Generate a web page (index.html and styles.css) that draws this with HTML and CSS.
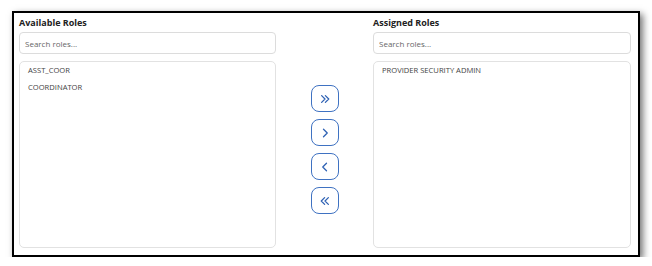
FILE: index.html
```html
<!DOCTYPE html>
<html lang="en">
<head>
<meta charset="UTF-8" />
<title>Role Assignment</title>
<link rel="stylesheet" href="styles.css">
</head>
<body>
  <div class="frame">
    <section class="panel">
      <h3>Available Roles</h3>
      <input type="text" class="search" placeholder="Search roles..." />
      <ul class="list">
        <li>ASST_COOR</li>
        <li>COORDINATOR</li>
      </ul>
    </section>

    <div class="moves">
      <button type="button" aria-label="Move all right">
        <svg viewBox="0 0 16 16"><path d="M3.5 3.5 L8 8 L3.5 12.5 M8.5 3.5 L13 8 L8.5 12.5" /></svg>
      </button>
      <button type="button" aria-label="Move right">
        <svg viewBox="0 0 16 16"><path d="M6 3 L11 8 L6 13" /></svg>
      </button>
      <button type="button" aria-label="Move left">
        <svg viewBox="0 0 16 16"><path d="M10 3 L5 8 L10 13" /></svg>
      </button>
      <button type="button" aria-label="Move all left">
        <svg viewBox="0 0 16 16"><path d="M7.5 3.5 L3 8 L7.5 12.5 M12.5 3.5 L8 8 L12.5 12.5" /></svg>
      </button>
    </div>

    <section class="panel">
      <h3>Assigned Roles</h3>
      <input type="text" class="search" placeholder="Search roles..." />
      <ul class="list">
        <li>PROVIDER SECURITY ADMIN</li>
      </ul>
    </section>
  </div>
</body>
</html>
```

FILE: styles.css
```css
* {
  box-sizing: border-box;
}
body, html {
  margin: 0;
  padding: 0;
  background-color: #fff;
  font-family: 'Open Sans', 'Noto Sans', sans-serif;
  color: #333;
}

.frame {
  margin: 11px 0 0 12px;
  width: 628px;
  height: 246px;
  border: 2px solid #000;
  box-shadow: 3px 3px 7px rgba(0, 0, 0, 0.55);
  padding: 3px 7px 7px 5px;
  display: grid;
  grid-template-columns: 257px 97px 1fr;
}

.panel {
  display: flex;
  flex-direction: column;
  min-height: 0;
}

h3 {
  margin: 0 0 2px;
  font-size: 9px;
  line-height: 14px;
  font-weight: 700;
  color: #222;
}

.search {
  height: 22px;
  border: 1px solid #dcdcdc;
  border-radius: 4px;
  padding: 0 5px;
  font-family: inherit;
  font-size: 8px;
  color: #555;
  margin-bottom: 7px;
}

.search::placeholder {
  color: #666;
}

.list {
  flex: 1;
  margin: 0;
  padding: 0 8px;
  list-style: none;
  border: 1px solid #e2e2e2;
  border-radius: 5px;
}

.list li {
  font-size: 7.6px;
  line-height: 17px;
  color: #444;
}

.moves {
  display: flex;
  flex-direction: column;
  align-items: center;
  gap: 7px;
  padding-top: 69px;
}

.moves button {
  width: 28px;
  height: 27px;
  padding: 0;
  background-color: #fff;
  border: 1.5px solid #3f72c2;
  border-radius: 8px;
  display: flex;
  align-items: center;
  justify-content: center;
  cursor: pointer;
}

.moves svg {
  width: 12px;
  height: 12px;
  fill: none;
  stroke: #2f62b4;
  stroke-width: 1.7;
  stroke-linecap: round;
  stroke-linejoin: round;
}
```
